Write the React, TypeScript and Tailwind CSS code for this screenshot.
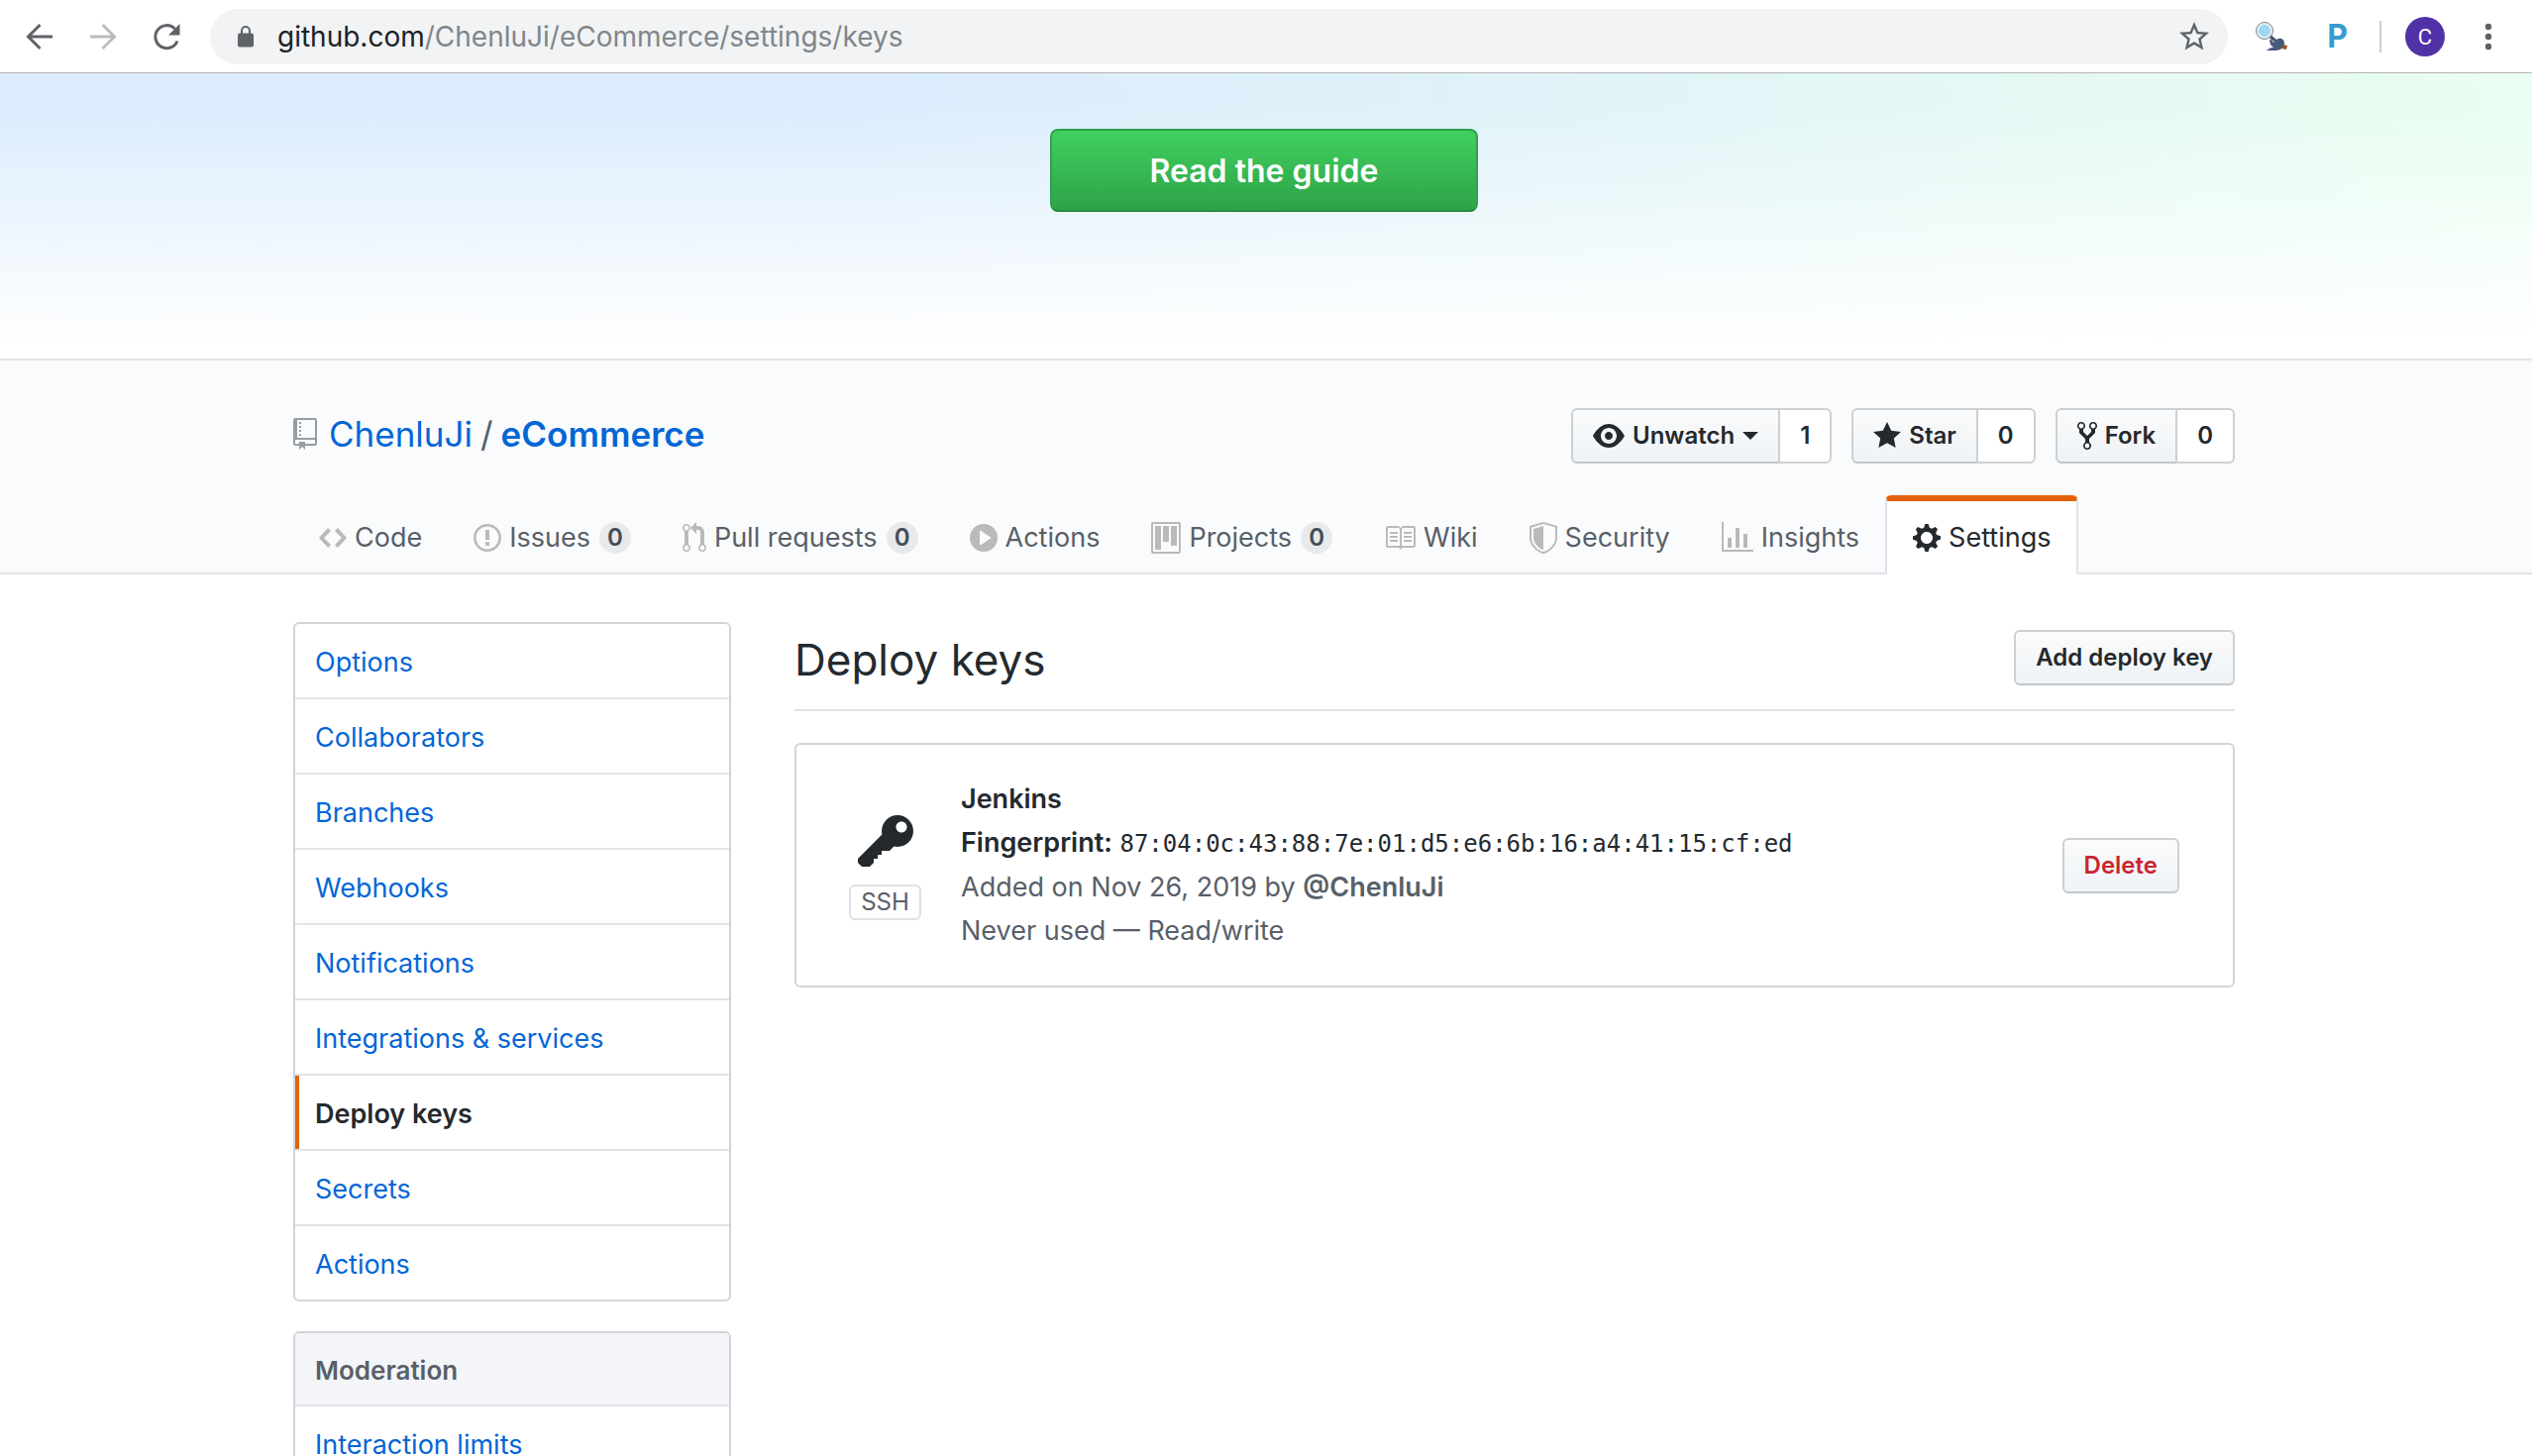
import type { ReactNode } from "react";

const icons = {
  repo: [12, "M4 9H3V8h1v1zm0-3H3v1h1V6zm0-2H3v1h1V4zm0-2H3v1h1V2zm8-1v12c0 .55-.45 1-1 1H6v2l-1.5-1.5L3 16v-2H1c-.55 0-1-.45-1-1V1c0-.55.45-1 1-1h10c.55 0 1 .45 1 1zm-1 10H1v2h2v-1h3v1h5v-2zm0-10H2v9h9V1z"],
  eye: [16, "M8.06 2C3 2 0 8 0 8s3 6 8.06 6C13 14 16 8 16 8s-3-6-7.94-6zM8 12c-2.2 0-4-1.78-4-4 0-2.2 1.8-4 4-4 2.22 0 4 1.8 4 4 0 2.22-1.78 4-4 4zm2-4c0 1.11-.89 2-2 2-1.11 0-2-.89-2-2 0-1.11.89-2 2-2 1.11 0 2 .89 2 2z"],
  star: [14, "M14 6l-4.9-.64L7 1 4.9 5.36 0 6l3.6 3.26L2.67 14 7 11.67 11.33 14l-.93-4.74L14 6z"],
  fork: [10, "M8 1a1.993 1.993 0 00-1 3.72V6L5 8 3 6V4.72A1.993 1.993 0 002 1a1.993 1.993 0 00-1 3.72V6.5l3 3v1.78A1.993 1.993 0 005 15a1.993 1.993 0 001-3.72V9.5l3-3V4.72A1.993 1.993 0 008 1zM2 4.2C1.34 4.2.8 3.65.8 3c0-.65.55-1.2 1.2-1.2.65 0 1.2.55 1.2 1.2 0 .65-.55 1.2-1.2 1.2zm3 10c-.66 0-1.2-.55-1.2-1.2 0-.65.55-1.2 1.2-1.2.65 0 1.2.55 1.2 1.2 0 .65-.55 1.2-1.2 1.2zm3-10c-.66 0-1.2-.55-1.2-1.2 0-.65.55-1.2 1.2-1.2.65 0 1.2.55 1.2 1.2 0 .65-.55 1.2-1.2 1.2z"],
  code: [14, "M9.5 3L8 4.5 11.5 8 8 11.5 9.5 13 14 8 9.5 3zm-5 0L0 8l4.5 5L6 11.5 2.5 8 6 4.5 4.5 3z"],
  issue: [14, "M7 2.3c3.14 0 5.7 2.56 5.7 5.7s-2.56 5.7-5.7 5.7A5.71 5.71 0 011.3 8c0-3.14 2.56-5.7 5.7-5.7zM7 1C3.14 1 0 4.14 0 8s3.14 7 7 7 7-3.14 7-7-3.14-7-7-7zm1 3H6v5h2V4zm0 6H6v2h2v-2z"],
  pull: [12, "M11 11.28V5c-.03-.78-.34-1.47-.94-2.06C9.46 2.35 8.78 2.03 8 2H7V0L4 3l3 3V4h1c.27.02.48.11.69.31.21.2.3.42.31.69v6.28A1.993 1.993 0 0010 15a1.993 1.993 0 001-3.72zm-1 2.92c-.66 0-1.2-.55-1.2-1.2 0-.65.55-1.2 1.2-1.2.65 0 1.2.55 1.2 1.2 0 .65-.55 1.2-1.2 1.2zM4 3c0-1.11-.89-2-2-2a1.993 1.993 0 00-1 3.72v6.56A1.993 1.993 0 002 15a1.993 1.993 0 001-3.72V4.72c.59-.34 1-.98 1-1.72zm-.8 10c0 .66-.55 1.2-1.2 1.2-.65 0-1.2-.55-1.2-1.2 0-.65.55-1.2 1.2-1.2.65 0 1.2.55 1.2 1.2zM2 4.2C1.34 4.2.8 3.65.8 3c0-.65.55-1.2 1.2-1.2.65 0 1.2.55 1.2 1.2 0 .65-.55 1.2-1.2 1.2z"],
  play: [14, "M14 8A7 7 0 110 8a7 7 0 0114 0zm-8.223 3.482l4.599-3.066a.5.5 0 000-.832L5.777 4.518A.5.5 0 005 4.934v6.132a.5.5 0 00.777.416z"],
  project: [15, "M10 12h3V2h-3v10zm-4-2h3V2H6v8zm-4 4h3V2H2v12zm-1 1h13V1H1v14zM14 0H1a1 1 0 00-1 1v14a1 1 0 001 1h13a1 1 0 001-1V1a1 1 0 00-1-1z"],
  book: [16, "M3 5h4v1H3V5zm0 3h4V7H3v1zm0 2h4V9H3v1zm11-5h-4v1h4V5zm0 2h-4v1h4V7zm0 2h-4v1h4V9zm2-6v9c0 .55-.45 1-1 1H9.5l-1 1-1-1H2c-.55 0-1-.45-1-1V3c0-.55.45-1 1-1h5.5l1 1 1-1H15c.55 0 1 .45 1 1zm-8 .5L7.5 3H2v9h6V3.5zm7-.5H9.5l-.5.5V12h6V3z"],
  shield: [14, "M0 2l7-2 7 2v6.02C14 12.69 8.69 16 7 16c-1.69 0-7-3.31-7-7.98V2zm1 .75L7 1l6 1.75v5.268C13 12.104 8.449 15 7 15c-1.449 0-6-2.896-6-6.982V2.75zm1 .75L7 2v12c-1.207 0-5-2.482-5-5.985V3.5z"],
  graph: [16, "M16 14v1H0V0h1v14h15zM5 13H3V8h2v5zm4 0H7V3h2v10zm4 0h-2V6h2v7z"],
  gear: [14, "M14 8.77v-1.6l-1.94-.64-.45-1.09.88-1.84-1.13-1.13-1.81.91-1.09-.45-.69-1.92h-1.6l-.63 1.94-1.11.45-1.84-.88-1.13 1.13.91 1.81-.45 1.09L0 7.23v1.59l1.94.64.45 1.09-.88 1.84 1.13 1.13 1.81-.91 1.09.45.69 1.92h1.59l.63-1.94 1.11-.45 1.84.88 1.13-1.13-.92-1.81.47-1.09L14 8.75v.02zM7 11c-1.66 0-3-1.34-3-3s1.34-3 3-3 3 1.34 3 3-1.34 3-3 3z"],
  key: [14, "M12.83 2.17C12.08 1.42 11.14 1.03 10 1c-1.13.03-2.08.42-2.83 1.17S6.04 3.86 6.01 5c0 .3.03.59.09.89L0 12v1l1 1h2l1-1v-1h1v-1h1v-1h2l1.09-1.11c.3.08.59.11.91.11 1.14-.03 2.08-.42 2.83-1.17S13.97 6.14 14 5c-.03-1.14-.42-2.08-1.17-2.83zM11 5.38c-.77 0-1.38-.61-1.38-1.38 0-.77.61-1.38 1.38-1.38.77 0 1.38.61 1.38 1.38 0 .77-.61 1.38-1.38 1.38z"],
} as const;

type IconName = keyof typeof icons;

function Icon({ name, className = "h-8" }: { name: IconName; className?: string }) {
  const [width, d] = icons[name];
  return (
    <svg viewBox={`0 0 ${width} 16`} className={`w-auto shrink-0 ${className}`} fill="currentColor" aria-hidden="true">
      <path fillRule="evenodd" d={d} />
    </svg>
  );
}

function BrowserBar() {
  return (
    <header className="flex h-[74px] items-center border-b border-[#b6b4b6] bg-white pr-10 pl-5 text-[#5f6368]">
      <button type="button" aria-label="Back" className="flex w-16 justify-start">
        <svg viewBox="0 0 40 40" className="size-10" fill="none" stroke="currentColor" strokeWidth="3">
          <path d="M33 20H9M20.5 8 8.500 20l12 12" />
        </svg>
      </button>
      <button type="button" aria-label="Forward" className="flex w-16 justify-start text-[#babcbe]">
        <svg viewBox="0 0 40 40" className="size-10" fill="none" stroke="currentColor" strokeWidth="3">
          <path d="M7 20h24M19.500 8l12 12-12 12" />
        </svg>
      </button>
      <button type="button" aria-label="Reload" className="flex w-16 justify-start">
        <svg viewBox="0 0 40 40" className="size-10" fill="none" stroke="currentColor" strokeWidth="3">
          <path d="M31 24.500A11.500 11.500 0 1 1 28.500 12" />
          <path d="M33.500 7v11.500H22z" fill="currentColor" stroke="none" />
        </svg>
      </button>
      <div className="flex h-14 flex-1 items-center rounded-full bg-[#f1f3f4] pr-4 pl-7">
        <svg viewBox="0 0 16 22" className="h-[22px] w-4 shrink-0" aria-hidden="true">
          <rect y="7.500" width="16" height="14" rx="2" fill="#5f6368" />
          <path d="M4 9V5a4 4 0 0 1 8 0v4" fill="none" stroke="#5f6368" strokeWidth="2" />
        </svg>
        <p className="ml-6 flex-1 text-[28px] leading-9 text-[#80868b]">
          <span className="text-[#202124]">github.com</span>/ChenluJi/eCommerce/settings/keys
        </p>
        <button type="button" aria-label="Bookmark this page">
          <svg viewBox="0 0 24 24" className="size-9" fill="#5f6368">
            <path d="M22 9.240l-7.190-.62L12 2 9.190 8.630 2 9.240l5.460 4.730L5.820 21 12 17.270 18.180 21l-1.630-7.030L22 9.240zM12 15.400l-3.760 2.270 1-4.280-3.320-2.880 4.380-.38L12 6.100l1.710 4.040 4.380.38-3.320 2.880 1 4.280L12 15.400z" />
          </svg>
        </button>
      </div>
      <button type="button" aria-label="Search extension" className="ml-7">
        <svg viewBox="0 0 32 32" className="size-8">
          <path d="m14 15 7 6" stroke="#4b5768" strokeWidth="3" />
          <path d="M11 30c2-2 4-3 7-3l-3-3-1-4 2-2 1 3 3 1c0-3 3-5 6-4 3 1 4 5 2 8l-3 3-4 1z" fill="#475a7c" />
          <path d="m26 28 2-4 4 1-1 4z" fill="#9a5230" />
          <circle cx="9" cy="10" r="7" fill="#9ed8f5" stroke="#e8eef2" strokeWidth="2" />
          <circle cx="9" cy="10" r="8.500" fill="none" stroke="#77828c" />
        </svg>
      </button>
      <button type="button" aria-label="P extension" className="ml-10 text-[32px] leading-8 font-bold text-[#3a9bd0]">P</button>
      <div className="mx-6 ml-8 h-8 w-[2px] bg-[#cdcdcd]" />
      <button type="button" aria-label="Profile" className="size-10 rounded-full bg-[#5132a6] font-['Roboto'] text-[22px] text-white">
        C
      </button>
      <button type="button" aria-label="Menu" className="ml-10">
        <svg viewBox="0 0 8 28" className="h-7 w-2" fill="currentColor">
          <circle cx="4" cy="4" r="3.200" />
          <circle cx="4" cy="14" r="3.200" />
          <circle cx="4" cy="24" r="3.200" />
        </svg>
      </button>
    </header>
  );
}

function SocialButton({ label, count, children }: { label: string; count: string; children: ReactNode }) {
  return (
    <li className="flex text-[24px] leading-[52px] font-semibold">
      <button
        type="button"
        aria-label={label}
        className="flex items-center gap-2 rounded-l-[6px] border-2 border-[#cdd0d3] border-b-[#c3c7cb] bg-linear-to-b from-[#fafbfc] to-[#eff3f6] px-5"
      >
        {children}
      </button>
      <a href="#" className="rounded-r-[6px] border-2 border-l-0 border-[#cdd0d3] bg-white px-5">
        {count}
      </a>
    </li>
  );
}

const tabs: { icon: IconName; label: string; count?: string }[] = [
  { icon: "code", label: "Code" },
  { icon: "issue", label: "Issues", count: "0" },
  { icon: "pull", label: "Pull requests", count: "0" },
  { icon: "play", label: "Actions" },
  { icon: "project", label: "Projects", count: "0" },
  { icon: "book", label: "Wiki" },
  { icon: "shield", label: "Security" },
  { icon: "graph", label: "Insights" },
  { icon: "gear", label: "Settings" },
];

function RepoHeader() {
  return (
    <section className="border-y-2 border-[#e1e4e8] bg-[#fafbfc] pr-1">
      <div className="mx-auto max-w-[1960px]">
        <div className="flex items-start justify-between pt-12">
          <h1 className="flex items-center text-[35px] leading-[52px] text-[#586069]">
            <Icon name="repo" className="mr-3 h-8 text-[#959da5]" />
            <a href="#" className="text-[#0366d6]">ChenluJi</a>
            <span className="mx-2">/</span>
            <a href="#" className="font-semibold text-[#0366d6]">eCommerce</a>
          </h1>
          <ul className="flex gap-5">
            <SocialButton label="Unwatch" count="1">
              <Icon name="eye" />
              Unwatch
              <span className="border-x-8 border-t-8 border-x-transparent border-t-current" />
            </SocialButton>
            <SocialButton label="Star" count="0">
              <Icon name="star" />
              Star
            </SocialButton>
            <SocialButton label="Fork" count="0">
              <Icon name="fork" />
              Fork
            </SocialButton>
          </ul>
        </div>
        <nav aria-label="Repository" className="mt-8 -mb-[2px] flex">
          {tabs.map((tab) => {
            const selected = tab.label === "Settings";
            return (
              <a
                key={tab.label}
                href="#"
                aria-current={selected ? "page" : undefined}
                className={
                  selected
                    ? "flex h-20 items-center gap-2 rounded-t-[6px] border-x-2 border-t-[6px] border-x-[#e1e4e8] border-t-[#e36209] bg-white px-[26px] text-[#24292e]"
                    : "flex h-20 items-center gap-2 border-x-2 border-t-[6px] border-transparent px-6 text-[#586069]"
                }
              >
                <Icon name={tab.icon} className={selected ? "h-8" : "h-8 text-[#b9babc]"} />
                {tab.label}
                {tab.count && (
                  <span className="ml-px h-8 min-w-8 rounded-full bg-[#e7e9eb] text-center text-[24px] leading-8 font-semibold text-[#444d56]">
                    {tab.count}
                  </span>
                )}
              </a>
            );
          })}
        </nav>
      </div>
    </section>
  );
}

const settingsLinks = [
  "Options",
  "Collaborators",
  "Branches",
  "Webhooks",
  "Notifications",
  "Integrations & services",
  "Deploy keys",
  "Secrets",
  "Actions",
];

function Sidebar() {
  return (
    <aside className="flex w-[442px] shrink-0 flex-col gap-[30px]">
      <nav aria-label="Settings" className="divide-y-2 divide-[#e1e4e8] overflow-hidden rounded-[6px] border-2 border-[#d1d5da]">
        {settingsLinks.map((link) => (
          <a
            key={link}
            href="#"
            className={
              link === "Deploy keys"
                ? "flex pt-[18px] pb-[14px] pl-5 font-semibold text-[#24292e] shadow-[inset_4px_0_#e36209]"
                : "flex pt-[18px] pb-[14px] pl-5 text-[#0366d6]"
            }
          >
            {link}
          </a>
        ))}
      </nav>
      <nav aria-label="Moderation" className="divide-y-2 divide-[#e1e4e8] overflow-hidden rounded-[6px] border-2 border-[#d1d5da]">
        <h2 className="bg-[#f3f5f8] pt-[18px] pb-[14px] pl-5 text-[26px] leading-10 font-semibold text-[#586069]">Moderation</h2>
        <a href="#" className="block pt-[18px] pb-[14px] pl-5 text-[#0366d6]">
          Interaction limits
        </a>
      </nav>
    </aside>
  );
}

function Button({ children, danger = false }: { children: ReactNode; danger?: boolean }) {
  return (
    <button
      type="button"
      className={`rounded-[6px] border-2 border-[#cdd0d3] border-b-[#c3c7cb] bg-linear-to-b from-[#fafbfc] to-[#eff3f6] px-5 text-[24px] leading-[52px] font-semibold ${danger ? "text-[#cb2431]" : "text-[#24292e]"}`}
    >
      {children}
    </button>
  );
}

function DeployKeys() {
  return (
    <section className="min-w-0 flex-1">
      <div className="flex h-[90px] items-start justify-between border-b-2 border-[#e1e4e8] pt-2">
        <h2 className="text-[44px] leading-[60px]">Deploy keys</h2>
        <Button>Add deploy key</Button>
      </div>
      <div className="mt-8 flex items-center rounded-[6px] border-2 border-[#d1d5da] py-[33px] pr-[54px] pl-[53px]">
        <div className="flex w-[73px] flex-col items-center gap-[10px]">
          <Icon name="key" className="h-16" />
          <span className="rounded-[6px] border-2 border-[#dfe1e4] px-[10px] text-[24px] leading-8 text-[#586069]">SSH</span>
        </div>
        <div className="ml-10 flex-1 leading-[44px] text-[#586069]">
          <p className="font-semibold text-[#24292e]">Jenkins</p>
          <p className="text-[#24292e]">
            <span className="font-semibold">Fingerprint:</span>{" "}
            <code className="font-['DejaVu_Sans_Mono',monospace] text-[24px]">87:04:0c:43:88:7e:01:d5:e6:6b:16:a4:41:15:cf:ed</code>
          </p>
          <p>
            Added on Nov 26, 2019 by{" "}
            <a href="#" className="font-semibold">@ChenluJi</a>
          </p>
          <p>Never used — Read/write</p>
        </div>
        <Button danger>Delete</Button>
      </div>
    </section>
  );
}

export default function App() {
  return (
    <div className="h-screen overflow-hidden bg-white font-['Inter',sans-serif] text-[27px] leading-[42px] text-[#24292e]">
      <BrowserBar />
      <section className="flex h-72 justify-center bg-[linear-gradient(180deg,rgba(255,255,255,0)_10%,#fff_95%),linear-gradient(80deg,#dbecfd_35%,#e0f3f8_62%,#e8fef0_98%)] pt-14 pr-1">
        <a
          href="#"
          className="h-[84px] w-[432px] rounded-[8px] border-2 border-[#31a04c] border-b-[#2a8a41] bg-linear-to-b from-[#40d060] to-[#2fa248] text-center text-[32px] leading-[82px] font-semibold text-white"
        >
          Read the guide
        </a>
      </section>
      <RepoHeader />
      <div className="pr-1">
        <main className="mx-auto flex max-w-[1960px] items-start gap-16 pt-12">
          <Sidebar />
          <DeployKeys />
        </main>
      </div>
    </div>
  );
}
